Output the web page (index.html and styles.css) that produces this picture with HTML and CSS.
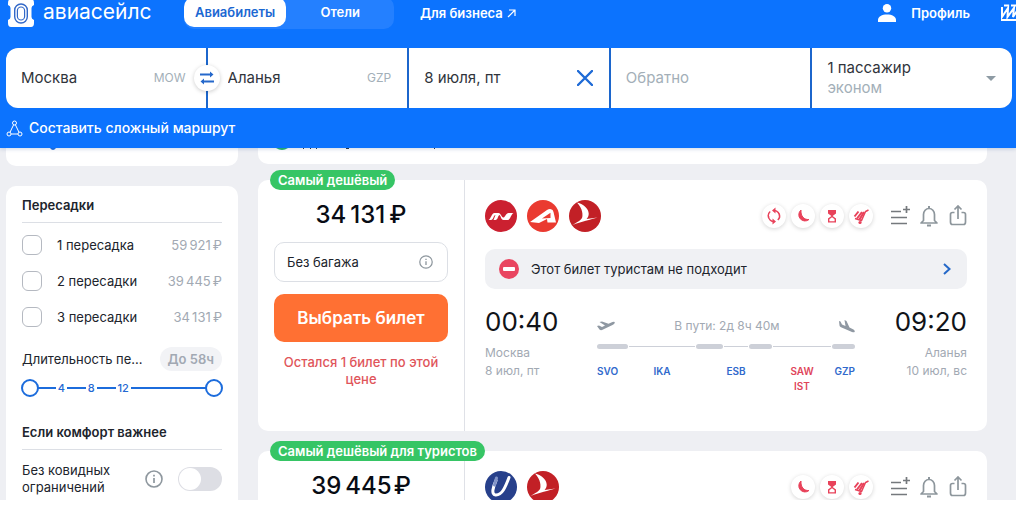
FILE: index.html
```html
<!DOCTYPE html>
<html lang="ru">
<head>
<meta charset="utf-8">
<meta name="viewport" content="width=device-width, initial-scale=1">
<title>Авиасейлс</title>
<link rel="stylesheet" href="styles.css">
</head>
<body>
<svg class="sprite" aria-hidden="true">
  <symbol id="turkish" viewBox="0 0 32 32"><circle cx="16" cy="16" r="16" fill="#c22026"/><path d="M8 2.500C15 4 19.500 9 19.700 13.500C19.800 15.800 19 17.500 17.600 19L28.500 17.500C22 19.500 12 21.800 3.500 25C8 22 12.500 20.500 13.300 17C14.200 12 12 7 8 2.500Z" fill="#fff"/></symbol>
  <symbol id="nordwind" viewBox="0 0 32 32"><circle cx="16" cy="16" r="16" fill="#cb2030"/><path d="M3.500 20C6 19 6.500 13 9.500 13H13.500C16 13 16.500 18 18.500 17.500C20.500 17 21 13 23.500 13H28.500C26 14 25.500 20 22.500 20H18.500C16 20 15.500 15 14.500 15C12.500 16 13 20 10.500 20H8.500L10.500 15C8.500 15 8.500 20 6 20Z" fill="#fff"/></symbol>
  <symbol id="azimuth" viewBox="0 0 32 32"><circle cx="16" cy="16" r="16" fill="#ea3a30"/><path fill-rule="evenodd" d="M3 22L20 10Q22 8.800 24 9.200Q26 9.500 26.500 12L29 22.500H20.500L20 19L12 23ZM15 18.500L23.500 18V12.800Z" fill="#fff"/></symbol>
  <symbol id="utair" viewBox="0 0 32 32"><circle cx="16" cy="16" r="16" fill="#27408b"/><path d="M11 9.500C8 16 6 23.500 10.500 24C17 24.500 20.500 16 24 6.500" fill="none" stroke="#fff" stroke-width="3" stroke-linecap="round"/><path d="M11.500 7L9.500 14" stroke="#8294c8" stroke-width="3" stroke-linecap="round"/></symbol>
  <symbol id="change" viewBox="0 0 24 24"><path d="M8.200 16A5.500 5.500 0 0 1 8.200 7.500M12.500 6.500A5.500 5.500 0 0 1 17.500 12.500M15.800 16A5.500 5.500 0 0 0 17 9.500M6.500 12A5.500 5.500 0 0 0 11.500 17.500" fill="none" stroke="#e8425a" stroke-width="1.500"/><path d="M13.500 3.500V9.500L10 6.500ZM10.500 14.500V20.500L14 17.500Z" fill="#e8425a"/></symbol>
  <symbol id="night" viewBox="0 0 24 24"><path d="M10 6A6 6 0 1 0 18 15.500C13 16 9.500 12 10 6Z" fill="#e8425a" stroke="#e8425a"/></symbol>
  <symbol id="wait" viewBox="0 0 24 24"><path d="M8 6H16V9.500L12.600 12L16 14.500V18.500H8V14.500L11.400 12L8 9.500Z" fill="#e8425a"/><path d="M12 13.300L14.600 15.200V17.200H9.400V15.200Z" fill="#fff"/></symbol>
  <symbol id="luggage" viewBox="0 0 24 24"><path d="M5.500 12.500L9.500 7.500M8 14.500L13 8" stroke="#e8425a" stroke-width="2"/><path d="M10.500 15.500L15 8" stroke="#e8425a" stroke-width="2.200"/><path d="M6 14.500L12.500 16.500L16.500 7.500L19.500 6" fill="none" stroke="#e8425a" stroke-width="1.500"/><circle cx="11" cy="18.500" r="1.600" fill="#e8425a"/></symbol>
  <symbol id="compare" viewBox="0 0 20 22"><path d="M1 6.500H11M1 12.500H17M1 18.500H17M13 4.500H20M16.500 1V8" fill="none" stroke="#75797d" stroke-width="1.700"/></symbol>
  <symbol id="bell" viewBox="0 0 20 22"><path d="M2 18L4.500 15.500V9.500A5.500 6 0 0 1 15.500 9.500V15.500L18 18Z" fill="none" stroke="#8d969c" stroke-width="1.700" stroke-linejoin="round"/><path d="M10 1V4M8 20.500H12" stroke="#8d969c" stroke-width="2"/></symbol>
  <symbol id="share" viewBox="0 0 20 22"><path d="M6.500 7.500H4.500Q2.500 7.500 2.500 9.500V17Q2.500 19.500 4.500 19.500H15.500Q17.500 19.500 17.500 17V9.500Q17.500 7.500 15.500 7.500H13.500M10 14V1M6.500 4.500L10 1L13.500 4.500" fill="none" stroke="#8d969c" stroke-width="1.700"/></symbol>
  <symbol id="info" viewBox="0 0 18 18"><circle cx="9" cy="9" r="8" fill="none" stroke="#8e979e" stroke-width="1.600"/><path d="M9 8V13M9 4.700V6.500" stroke="#8e979e" stroke-width="1.700"/></symbol>
</svg>
<div class="app">
  <header class="header">
    <div class="topbar">
      <a class="brand" href="#">
        <svg width="26" height="28" viewBox="0 0 26 28" aria-hidden="true"><path d="M3 0H23Q26 0 26 4V6Q23.500 7 23.500 9V18Q23.500 20 26 21V24Q26 28 23 28H3Q0 28 0 24V21Q2.500 20 2.500 18V9Q2.500 7 0 6V4Q0 0 3 0Z" fill="#fff"/><rect x="6.700" y="5" width="12.600" height="19" rx="6.300" fill="none" stroke="#3268c8" stroke-width="1.400"/><rect x="9.400" y="8" width="7.200" height="13" rx="3.600" fill="none" stroke="#3268c8" stroke-width="1.200"/></svg>
        <span>авиасейлс</span>
      </a>
      <nav class="nav">
        <div class="tabs"><a class="tab active" href="#">Авиабилеты</a><a class="tab" href="#">Отели</a></div>
        <a class="business" href="#">Для бизнеса <svg width="9" height="9" viewBox="0 0 9 9" aria-hidden="true"><path d="M1 8L8 1M2 1H8V7" fill="none" stroke="#fff" stroke-width="1.200"/></svg></a>
      </nav>
      <a class="profile" href="#"><svg width="18" height="18" viewBox="0 0 18 18" aria-hidden="true"><circle cx="9" cy="4.200" r="4.200" fill="#fff"/><path d="M0 18V16C0 12.500 4 10.500 9 10.500S18 12.500 18 16V18Z" fill="#fff"/></svg>Профиль</a>
      <a class="wlogo" href="#" aria-label="Журнал"><svg width="24" height="18" viewBox="0 0 24 18"><path d="M1 3V13L7 4L6.500 13L13 4L12 13L18 4V13M3 1.500H8M10 1.500H18M0 16H24" fill="none" stroke="#fff" stroke-width="2"/></svg></a>
    </div>
    <form class="search">
      <label class="field"><input aria-label="Откуда" value="Москва"><span class="code">MOW</span></label>
      <div class="field to"><button class="swap" type="button" aria-label="Поменять местами"><svg width="14" height="14" viewBox="0 0 14 14"><path d="M0 3.500H12M2 10.500H14" fill="none" stroke="#2568cb" stroke-width="1.800"/><path d="M10 .500L13.500 3.500L10 6.500ZM4 7.500L.500 10.500L4 13.500Z" fill="#2568cb"/></svg></button><input aria-label="Куда" value="Аланья"><span class="code">GZP</span></div>
      <div class="field"><input aria-label="Туда" value="8 июля, пт"><button class="clear" type="button" aria-label="Очистить"><svg width="16" height="16" viewBox="0 0 16 16"><path d="M1 1L15 15M15 1L1 15" stroke="#1f6bd6" stroke-width="2.400" stroke-linecap="round"/></svg></button></div>
      <label class="field"><input aria-label="Обратно" placeholder="Обратно"></label>
      <button class="field passengers" type="button"><span><span class="count">1 пассажир</span><span class="class">эконом</span></span><svg width="10" height="5" viewBox="0 0 10 5" aria-hidden="true"><path d="M0 0H10L5 5Z" fill="#8e9ba4"/></svg></button>
    </form>
    <a class="complex" href="#"><svg width="17" height="17" viewBox="0 0 17 17" aria-hidden="true"><g fill="none" stroke="#fff"><circle cx="8.500" cy="3" r="2"/><circle cx="3" cy="14" r="2"/><circle cx="14" cy="14" r="2"/><path d="M7.600 4.800L4 12.300M9.400 4.800L13 12.300M5 14H12"/></g></svg>Составить сложный маршрут</a>
  </header>
  <main class="page">
    <aside class="sidebar">
      <section class="card stub"><svg width="100" height="3" viewBox="0 0 100 3" aria-hidden="true"><path d="M44 0Q47 4 50 0Z" fill="#1a6fe8"/></svg></section>
      <section class="card filters">
        <h2>Пересадки</h2>
        <label class="check"><input type="checkbox"><span>1 пересадка</span><span class="sum">59&#8198;921&#8198;₽</span></label>
        <label class="check"><input type="checkbox"><span>2 пересадки</span><span class="sum">39&#8198;445&#8198;₽</span></label>
        <label class="check"><input type="checkbox"><span>3 пересадки</span><span class="sum">34&#8198;131&#8198;₽</span></label>
        <div class="duration"><span title="Длительность пересадки">Длительность пе...</span><span class="pill">До 58ч</span></div>
        <div class="slider">
          <div class="track"><i class="a"></i><span>4</span><i class="b"></i><span>8</span><i class="b"></i><span>12</span><i class="c"></i></div>
          <input type="range" aria-label="Минимум" min="0" max="58" value="0"><input type="range" aria-label="Максимум" min="0" max="58" value="58">
        </div>
        <h2>Если комфорт важнее</h2>
        <div class="covid"><label for="covid">Без ковидных ограничений</label><svg width="18" height="18" aria-hidden="true"><use href="#info"/></svg><input id="covid" class="toggle" type="checkbox" role="switch"></div>
      </section>
    </aside>
    <div class="results">
      <section class="card stub"><svg width="200" height="3" viewBox="0 0 200 3" aria-hidden="true"><path d="M18 0H30Q24 4 18 0Z" fill="#27b66f"/><path d="M45 0H46M52 0H53M58 0H59M88 0H91M176 0H177" stroke="#31363c" stroke-width="2"/></svg></section>
      <article class="ticket">
        <span class="badge">Самый дешёвый</span>
        <div class="buy">
          <div class="price">34&#8198;131&#8198;₽</div>
          <button class="baggage" type="button">Без багажа<svg width="14" height="14" aria-hidden="true"><use href="#info"/></svg></button>
          <button class="select" type="button">Выбрать билет</button>
          <p class="left">Остался 1 билет по этой цене</p>
        </div>
        <div class="details">
          <div class="tools">
            <div class="airlines"><svg><use href="#nordwind"/></svg><svg><use href="#azimuth"/></svg><svg><use href="#turkish"/></svg></div>
            <div class="marks"><svg><use href="#change"/></svg><svg><use href="#night"/></svg><svg><use href="#wait"/></svg><svg><use href="#luggage"/></svg></div>
            <div class="actions"><button type="button" aria-label="Сравнить"><svg><use href="#compare"/></svg></button><button type="button" aria-label="Следить"><svg><use href="#bell"/></svg></button><button type="button" aria-label="Поделиться"><svg><use href="#share"/></svg></button></div>
          </div>
          <button class="warning" type="button"><svg width="20" height="20" viewBox="0 0 20 20" aria-hidden="true"><circle cx="10" cy="10" r="10" fill="#e94560"/><rect x="4" y="8" width="12" height="4" rx="1" fill="#fff"/></svg><span>Этот билет туристам не подходит</span><svg width="8" height="12" viewBox="0 0 8 12" aria-hidden="true"><path d="M1 1L6.500 6L1 11" fill="none" stroke="#2468c8" stroke-width="2"/></svg></button>
          <div class="flight">
            <div class="point"><time>00:40</time><span>Москва</span><span>8 июл, пт</span></div>
            <div class="route">
              <div class="way"><svg width="18" height="12" viewBox="0 0 18 12" aria-hidden="true"><path d="M0 6L2 5.500L5 7L8 5.500L2.500 2L5 1.500L11.500 3.800L15.500 2Q18 1.300 17.800 2.800Q17.500 4 15.500 5L5 10Q3.500 10.500 2.500 9.500Z" fill="#8f98a2"/></svg><span>В пути: 2д 8ч 40м</span><svg width="16" height="13" viewBox="0 0 16 13" aria-hidden="true"><path d="M0 1L1.500 1.500L3 4.500L6.500 6L5.500 0L7.500 1L10.500 7.500L14.500 9.500Q16.500 11 15.500 12Q14.800 12.500 13 12L2 7.300Q.600 6.700 .500 5.500Z" fill="#8f98a2"/></svg></div>
              <div class="legs"><i></i><b></b><i></i><b></b><i></i><b></b><i></i></div>
              <div class="codes"><span class="first">SVO</span><span>IKA</span><span></span><span>ESB</span><span></span><span class="bad">SAW<br>IST</span><span class="last">GZP</span></div>
            </div>
            <div class="point end"><time>09:20</time><span>Аланья</span><span>10 июл, вс</span></div>
          </div>
        </div>
      </article>
      <article class="ticket">
        <span class="badge">Самый дешёвый для туристов</span>
        <div class="buy"><div class="price">39&#8198;445&#8202;₽</div></div>
        <div class="details">
          <div class="tools">
            <div class="airlines"><svg><use href="#utair"/></svg><svg><use href="#turkish"/></svg></div>
            <div class="marks"><svg><use href="#night"/></svg><svg><use href="#wait"/></svg><svg><use href="#luggage"/></svg></div>
            <div class="actions"><button type="button" aria-label="Сравнить"><svg><use href="#compare"/></svg></button><button type="button" aria-label="Следить"><svg><use href="#bell"/></svg></button><button type="button" aria-label="Поделиться"><svg><use href="#share"/></svg></button></div>
          </div>
        </div>
      </article>
    </div>
  </main>
</div>
</body>
</html>
```
FILE: styles.css
```css
* { box-sizing: border-box; }
body { margin: 0; background: #fff; color: #20242c; font: 13px/18px Inter, "Noto Sans", sans-serif; }
a { color: inherit; text-decoration: none; }
button, input { font: inherit; color: inherit; border: 0; padding: 0; background: none; margin: 0; }
button { cursor: pointer; }
svg { display: block; flex: none; }
.sprite { position: absolute; width: 0; height: 0; }
.app { height: calc(100vh - 18px); overflow: hidden; background: #eeeff3; display: flex; flex-direction: column; }

.header { flex: none; position: relative; z-index: 2; background: #0c73fe; color: #fff; padding: 0 4px 0 6px; box-shadow: 0 1px 4px #0c3c8033; }
.topbar { display: flex; align-items: center; height: 48px; padding: 0 0 22px 2px; font-weight: 600; }
.brand { display: flex; align-items: center; gap: 9px; width: 176px; font-size: 21px; line-height: 26px; font-weight: 400; }
.brand span { padding-bottom: 2px; }
.nav { display: flex; align-items: center; flex: 1; gap: 26px; }
.tabs { display: flex; width: 210px; height: 32px; border-radius: 10px; background: #2480ff; padding-bottom: 2px; }
.tab { flex: 1; display: flex; align-items: center; justify-content: center; border-radius: 10px; }
.tab.active { flex: none; padding: 0 11px; background: #fff; color: #1b68d2; }
.business { display: flex; align-items: center; gap: 4px; }
.profile { display: flex; align-items: center; gap: 15px; }
.wlogo { width: 15px; margin: 0 -4px 0 31px; overflow: hidden; }

.search { display: grid; grid-template-columns: repeat(5, 1fr); gap: 2px; background: #1c66cc; border-radius: 12px; overflow: hidden; height: 60px; }
.field { display: flex; align-items: center; background: #fff; color: #30343b; min-width: 0; padding: 0 16px 0 15px; font-size: 15px; line-height: 20px; text-align: left; }
.field input { flex: 1; width: 0; outline: 0; }
.field input::placeholder { color: #a3afb8; opacity: 1; }
.field:first-child { padding-right: 20px; }
.code { color: #a3afb8; font-size: 12px; }
.to { position: relative; padding-left: 20px; }
.swap { position: absolute; left: -14px; top: 17px; width: 26px; height: 26px; border-radius: 50%; background: #fff; display: grid; place-items: center; box-shadow: 0 1px 4px #0003; }
.passengers { justify-content: space-between; }
.passengers .count, .passengers .class { display: block; }
.passengers .class { color: #a3afb8; }
.complex { display: flex; align-items: center; gap: 6px; height: 40px; font-size: 14px; font-weight: 500; }

.page { display: flex; align-items: flex-start; gap: 20px; padding: 0 29px 0 6px; }
.sidebar { flex: 0 0 232px; }
.results { flex: 1; min-width: 0; }
.card { background: #fff; border-radius: 10px; }
.card.stub { height: 18px; border-radius: 0 0 10px 10px; margin-bottom: 20px; }
.results .stub { height: 16px; margin-bottom: 16px; }
.filters { padding: 10px 16px 24px; }
h2 { margin: 0 0 4px; padding-bottom: 8px; border-bottom: 1px solid #dcdfe5; font-size: 13px; line-height: 18px; font-weight: 600; }
.check { display: flex; align-items: center; height: 36px; gap: 15px; }
.check input { appearance: none; width: 20px; height: 20px; border: 1px solid #b5b9c1; border-radius: 6px; }
.sum { margin-left: auto; color: #a2a9b3; }
.duration { display: flex; align-items: center; justify-content: space-between; height: 24px; margin-top: 12px; white-space: nowrap; }
.pill { background: #f2f3f6; border-radius: 12px; padding: 0 8px; line-height: 24px; color: #a2a9b3; font-weight: 600; }
.slider { position: relative; height: 18px; margin: 8px -1px 26px; }
.track { display: flex; align-items: center; height: 18px; padding: 0 16px; gap: 2px; color: #2468d2; font-size: 11px; font-weight: 500; }
.track i { height: 2px; background: #1c6cdc; }
.track .a, .track .b { flex: 19; }
.track .c { flex: 77; }
.slider input { appearance: none; position: absolute; inset: 0; width: 100%; height: 18px; pointer-events: none; }
.slider input::-webkit-slider-thumb { appearance: none; width: 18px; height: 18px; border: 2px solid #1c6cdc; border-radius: 50%; background: #fff; pointer-events: auto; }
.covid { display: flex; align-items: center; gap: 15px; margin-top: 12px; line-height: 17px; }
.covid label { flex: 1; }
.toggle { appearance: none; width: 44px; height: 24px; border-radius: 12px; background: #dddee4; padding: 1px; }
.toggle::before { content: ""; display: block; width: 22px; height: 22px; border-radius: 50%; background: #fff; }

.ticket { position: relative; display: flex; background: #fff; border-radius: 10px; min-height: 96px; margin-bottom: 20px; }
.badge { position: absolute; left: 12px; top: -10px; height: 20px; border-radius: 10px; background: #36c565; color: #fff; padding: 0 8px; line-height: 20px; font-weight: 600; }
.buy { width: 207px; border-right: 1px solid #dfe1e7; padding: 20px 16px 43px; text-align: center; }
.price { font-size: 24px; line-height: 30px; font-weight: 500; color: #080c14; margin-bottom: 12px; }
.baggage { display: flex; align-items: center; justify-content: space-between; width: 100%; height: 40px; padding: 0 14px 0 12px; border: 1px solid #dcdfe5; border-radius: 10px; }
.select { width: 100%; height: 48px; margin: 12px 0; border-radius: 10px; background: #ff7033; color: #fff; font-size: 17px; font-weight: 600; }
.left { margin: 0; color: #e0555a; font-weight: 500; line-height: 17px; }
.details { flex: 1; min-width: 0; padding: 20px; }
.tools { display: flex; align-items: center; height: 32px; }
.airlines { display: flex; gap: 10px; flex: 1; }
.airlines svg { width: 32px; height: 32px; }
.marks { display: flex; gap: 5px; margin-right: 17px; }
.marks svg { width: 24px; height: 24px; border-radius: 50%; background: #fff; box-shadow: 0 1px 4px #0000002b; }
.actions { display: flex; gap: 9px; margin-right: -1px; }
.actions svg { width: 20px; height: 22px; }
.warning { display: flex; align-items: center; gap: 12px; width: 100%; height: 40px; margin: 17px 0; padding: 0 16px 0 14px; border-radius: 10px; background: #f0f1f4; text-align: left; }
.warning span { flex: 1; }
.flight { display: grid; grid-template-columns: 112px 1fr 112px; }
.point { font-size: 12px; color: #a2a9b3; }
.point time { display: block; font-size: 26px; line-height: 32px; margin-bottom: 6px; color: #101318; }
.point span { display: block; }
.end { text-align: right; }
.route { padding-top: 11px; }
.way { display: flex; align-items: center; justify-content: space-between; height: 18px; font-size: 12px; color: #a2a9b3; }
.legs, .codes { display: grid; grid-template-columns: 31fr 68fr 27fr 26fr 23fr 60fr 23fr; align-items: center; }
.legs { margin: 9px 0 15px; }
.legs i { height: 5px; border-radius: 3px; background: #cdd0d8; }
.legs b { height: 1px; margin: 0 1px; background: #cdd0d8; }
.codes { align-items: start; font-size: 10px; line-height: 15px; font-weight: 600; color: #3069cc; }
.codes span { display: flex; justify-content: center; text-align: center; }
.codes .first { justify-content: flex-start; }
.codes .last { justify-content: flex-end; }
.codes .bad { color: #e0455a; }
```
